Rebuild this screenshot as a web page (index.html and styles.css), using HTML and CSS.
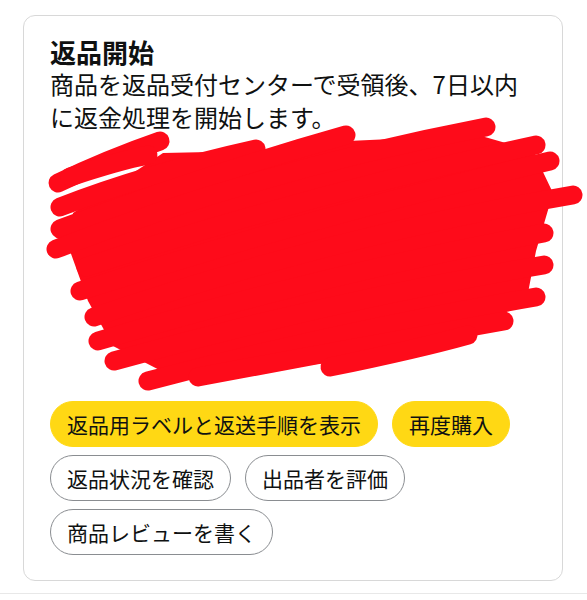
FILE: index.html
```html
<!DOCTYPE html>
<html lang="ja">
<head>
<meta charset="utf-8">
<title>返品開始</title>
<link rel="stylesheet" href="styles.css">
</head>
<body>
<div class="page">
  <section class="card">
    <h2 class="title">返品開始</h2>
    <p class="desc">商品を返品受付センターで受領後、7日以内に返金処理を開始します。</p>
    <div class="redacted">
      <svg class="scribble" width="530" height="270" viewBox="0 0 530 270" aria-hidden="true">
        <g transform="translate(-52,-132)" stroke="#fe0b1a" stroke-width="19" stroke-linecap="round" stroke-linejoin="round" fill="none">
          <polygon fill="#fe0b1a" stroke="none" points="75,212 165,152 260,150 350,140 480,134 535,150 555,192 538,250 530,292 500,318 330,362 175,376 115,345 90,300 72,250"/>
          <path d="M60 182 Q110 158 162 140"/>
          <path d="M72 176 Q120 160 150 154"/>
          <path d="M62 206 Q150 172 258 148"/>
          <path d="M62 228 Q200 176 348 134"/>
          <path d="M58 248 Q260 170 488 126"/>
          <path d="M88 266 Q300 196 538 144"/>
          <path d="M82 290 Q320 214 552 160"/>
          <path d="M96 316 Q330 236 575 194"/>
          <path d="M100 340 Q330 272 546 232"/>
          <path d="M116 360 Q330 300 546 264"/>
          <path d="M150 380 Q340 330 538 296"/>
          <path d="M200 376 Q360 346 506 320"/>
          <path d="M332 366 Q420 348 470 334"/>
        </g>
      </svg>
    </div>
    <div class="actions">
      <button class="btn btn-primary">返品用ラベルと返送手順を表示</button>
      <button class="btn btn-primary">再度購入</button>
      <button class="btn btn-outline">返品状況を確認</button>
      <button class="btn btn-outline">出品者を評価</button>
      <button class="btn btn-outline">商品レビューを書く</button>
    </div>
  </section>
  <div class="next"></div>
</div>
</body>
</html>
```
FILE: styles.css
```css
* { box-sizing: border-box; }
html, body {
  margin: 0;
  padding: 0;
  background: #ffffff;
}
body {
  font-family: "Noto Sans CJK JP", "Noto Sans", sans-serif;
  color: #0f1111;
}
.page {
  padding-top: 15px;
}
.card {
  margin-left: 23px;
  width: 540px;
  height: 566px;
  border: 1.5px solid #d8d8d8;
  border-radius: 12px;
  padding: 20px 26px 0 26px;
}
.title {
  margin: 0;
  font-size: 26px;
  line-height: 31px;
  font-weight: 700;
}
.desc {
  margin: 0;
  font-size: 24px;
  line-height: 33px;
}
.redacted {
  position: relative;
  height: 256px;
}
.scribble {
  position: absolute;
  left: 0;
  top: 0;
  overflow: visible;
}
.actions {
  margin-top: 12px;
  display: flex;
  flex-wrap: wrap;
  gap: 8px 14px;
}
.btn {
  height: 46px;
  padding: 0 16px;
  border-radius: 23px;
  font-family: inherit;
  font-size: 21px;
  line-height: 1;
  color: #0f1111;
  background: #fff;
  border: 1.5px solid #8a8d91;
}
.btn-primary {
  background: #ffd814;
  border-color: #ffd814;
}
.next {
  margin-top: 12px;
  border-top: 1px solid #e8e8e8;
}
```
